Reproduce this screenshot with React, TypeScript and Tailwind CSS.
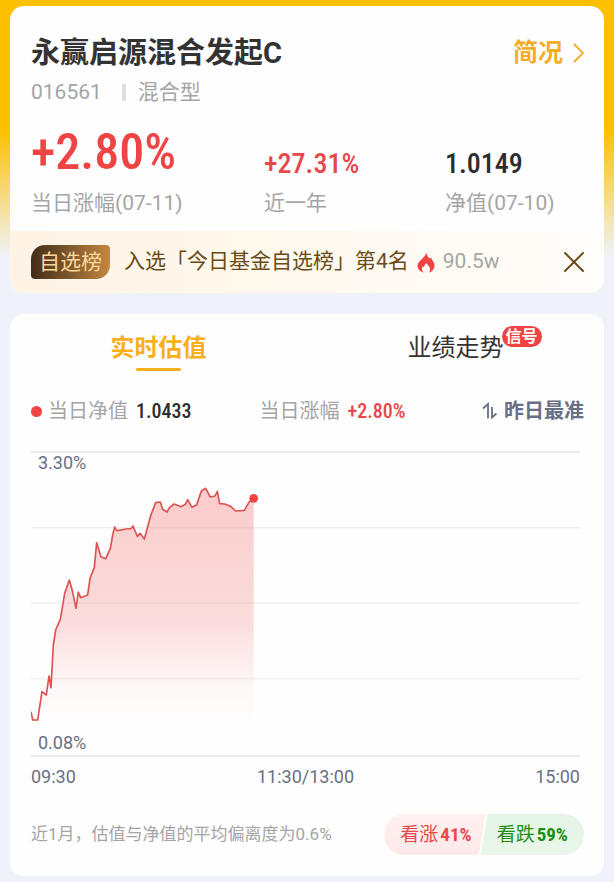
import { useState } from 'react';
import { X } from 'lucide-react';

const GRID_LINES = [230, 456, 683];

// intraday estimate, [x, y] in chart units
const POINTS = [
  [0, 782], [5, 807], [20, 807], [33, 722], [46, 732], [54, 675], [60, 710], [67, 582], [74, 537],
  [88, 505], [101, 427], [115, 387], [124, 419], [135, 472], [142, 423], [149, 440], [170, 432],
  [177, 382], [190, 349], [197, 275], [210, 317], [224, 323], [238, 293], [245, 252], [251, 228],
  [258, 239], [285, 234], [300, 233], [306, 225], [319, 256], [327, 247], [340, 264], [359, 194],
  [374, 155], [388, 153], [395, 175], [408, 183], [416, 169], [429, 159], [450, 167], [463, 160],
  [470, 146], [483, 169], [497, 161], [511, 120], [524, 112], [538, 138], [552, 135], [559, 121],
  [566, 158], [581, 159], [599, 166], [614, 180], [640, 178], [655, 152], [668, 142],
];

const linePath = 'M' + POINTS.map(([x, y]) => `${x} ${y}`).join('L');
const areaPath = `${linePath}L668 807L0 807Z`;

function Chevron() {
  return (
    <svg viewBox="0 0 11 20" className="h-5 w-[11px]" fill="none" stroke="currentColor" strokeWidth="1.8" aria-hidden="true">
      <path d="M1 1L10 10L1 19" />
    </svg>
  );
}

function Flame() {
  return (
    <svg viewBox="0 0 18 21" className="h-[21px] w-[18px]" aria-hidden="true">
      <path
        fill="#f04343"
        d="M9.4 0.4C9.8 3 10.8 4.8 12.6 6.6C13.3 6.3 13.8 5.8 14.1 5.2C14.4 7 15.2 8 16.2 9.6C17.2 11.2 17.7 12.6 17.5 14.2C17.1 17.4 15 19.8 12 20.6C13.2 19 13.4 17.2 12.6 15.4C11.8 13.8 10.2 13 9.6 11C8 12.4 7.2 13.6 6.9 15.2C6.4 15 6 14.6 5.8 14C4.6 16.2 4.9 18.6 6.4 20.6C3 19.6 0.5 17.2 0.5 13.8C0.5 11 2.2 9.6 4.4 7.4C6.6 5.3 8.8 3.4 9.4 0.4Z"
      />
    </svg>
  );
}

function SwapArrows() {
  return (
    <svg viewBox="0 0 16 18" className="h-[18px] w-4" fill="none" stroke="#677084" strokeWidth="1.8" aria-hidden="true">
      <path d="M1 6.5L6 2V16.5" />
      <path d="M10 5V15.5L14.5 11.5" />
    </svg>
  );
}

function EstimateChart() {
  return (
    <div className="relative">
      <svg viewBox="0 0 1647 918" className="block h-auto w-full" role="img" aria-label="实时估值">
        <defs>
          <linearGradient id="area" x1="0" y1="0" x2="0" y2="1">
            <stop offset="0" stopColor="#f04848" stopOpacity="0.28" />
            <stop offset="0.6" stopColor="#f04848" stopOpacity="0.18" />
            <stop offset="1" stopColor="#f8e8e0" stopOpacity="0.05" />
          </linearGradient>
        </defs>
        {GRID_LINES.map((y) => (
          <line key={y} x1="0" x2="1647" y1={y} y2={y} stroke="#f1f1f2" strokeWidth="5" />
        ))}
        <line x1="0" x2="1647" y1="3" y2="3" stroke="#e4e5e7" strokeWidth="5" />
        <line x1="0" x2="1647" y1="915" y2="915" stroke="#e4e5e7" strokeWidth="5" />
        <path d={areaPath} fill="url(#area)" />
        <path d={linePath} fill="none" stroke="#dc5352" strokeWidth="5" strokeLinejoin="round" />
        <circle cx="668" cy="142" r="13" fill="#f04343" />
      </svg>
      <span className="absolute top-0 left-[7px] leading-6">3.30%</span>
      <span className="absolute bottom-0.5 left-[7px] leading-6">0.08%</span>
    </div>
  );
}

export default function App() {
  const [showBanner, setShowBanner] = useState(true);
  const [tab, setTab] = useState<'estimate' | 'trend'>('estimate');

  return (
    <main className="flex min-h-screen flex-col gap-[21px] bg-[#eff3f9] bg-[linear-gradient(to_bottom,#fdc000_0px,#fdc000_130px,#eff3f9_256px)] px-2.5 pt-1.5 pb-1.5 font-[Roboto,'Noto_Sans_CJK_SC',sans-serif] text-[#a5a5a5]">
      <section className="overflow-hidden rounded-[14px] bg-[#fefefe]">
        <div className="pt-[26px] pr-5 pb-[7px] pl-[21px]">
          <div className="flex items-center justify-between leading-[42px]">
            <h1 className="text-[29px] font-bold text-[#333]">永赢启源混合发起C</h1>
            <a href="#profile" className="flex items-center gap-2.5 text-[25px] font-bold text-[#f3ad2b]">
              简况
              <Chevron />
            </a>
          </div>
          <p className="flex items-center text-[21px] leading-9">
            016561
            <span className="mr-3 ml-5 h-[17px] w-1 bg-[#dedede]" />
            混合型
          </p>
          <dl className="mt-3 grid grid-cols-[233fr_181fr_139fr] text-[21px]">
            <div className="flex flex-col-reverse">
              <dt className="leading-[42px]">当日涨幅(07-11)</dt>
              <dd className="font-['Roboto_Condensed',Roboto,sans-serif] text-[50px] leading-[60px] font-medium text-[#f04343]">+2.80%</dd>
            </div>
            <div className="flex flex-col-reverse">
              <dt className="leading-[42px]">近一年</dt>
              <dd className="font-['Roboto_Condensed',Roboto,sans-serif] text-[28px] leading-9 font-medium text-[#e8484a]">+27.31%</dd>
            </div>
            <div className="flex flex-col-reverse">
              <dt className="leading-[42px]">净值(07-10)</dt>
              <dd className="font-['Roboto_Condensed',Roboto,sans-serif] text-[28px] leading-9 font-medium text-[#2d2d2f]">1.0149</dd>
            </div>
          </dl>
        </div>
        {showBanner && (
          <div className="flex h-[62px] items-center bg-linear-to-r from-[#fef3e5] via-[#fef9ef] to-[#fffdfa] pr-3 pl-[21px] text-[21px]">
            <span className="rounded-tl-[14px] rounded-tr-sm rounded-br-[14px] rounded-bl-sm bg-linear-to-r from-[#422e18] to-[#c68843] px-2 leading-[34px] text-[#fbd79a]">自选榜</span>
            <span className="mr-2 ml-3.5 text-[#6b4a17]">入选「今日基金自选榜」第4名</span>
            <Flame />
            <span className="ml-2">90.5w</span>
            <button type="button" aria-label="关闭" className="ml-auto text-[#6b4a17]" onClick={() => setShowBanner(false)}>
              <X size={36} strokeWidth={1.3} />
            </button>
          </div>
        )}
      </section>

      <section className="rounded-[14px] bg-[#fefefe] pb-[21px]">
        <div className="grid grid-cols-2 justify-items-center pt-4 text-2xl leading-9">
          <button
            type="button"
            onClick={() => setTab('estimate')}
            className={`flex flex-col items-center ${tab === 'estimate' ? 'font-bold text-[#f9ae1c]' : 'text-[#333]'}`}
          >
            实时估值
            {tab === 'estimate' && <span className="mt-0.5 h-[3px] w-[45px] rounded-full bg-[#f9ae1c]" />}
          </button>
          <button
            type="button"
            onClick={() => setTab('trend')}
            className={`relative flex flex-col items-center ${tab === 'trend' ? 'font-bold text-[#f9ae1c]' : 'text-[#333]'}`}
          >
            业绩走势
            {tab === 'trend' && <span className="mt-0.5 h-[3px] w-[45px] rounded-full bg-[#f9ae1c]" />}
            <span className="absolute -top-1 left-full -ml-0.5 rounded-full bg-[#f04343] px-1 text-base leading-[21px] font-bold whitespace-nowrap text-white">信号</span>
          </button>
        </div>

        <div className="pr-5 pl-[21px]">
          <div className="mt-5 grid grid-cols-[229fr_200fr_125fr] items-center text-xl leading-10">
            <span className="flex items-center">
              <span className="mr-1.5 size-[11px] rounded-full bg-[#f04343]" />
              当日净值
              <b className="ml-2 font-['Roboto_Condensed',Roboto,sans-serif] font-medium text-[#2d2d2f]">1.0433</b>
            </span>
            <span className="flex items-center">
              当日涨幅
              <b className="ml-2 font-['Roboto_Condensed',Roboto,sans-serif] font-medium text-[#e8484a]">+2.80%</b>
            </span>
            <button type="button" className="flex items-center gap-1.5 justify-self-end font-bold whitespace-nowrap text-[#677084]">
              <SwapArrows />
              昨日最准
            </button>
          </div>

          <div className="mt-5 pr-1 text-lg text-[#677084]">
            <EstimateChart />
            <div className="flex justify-between leading-10">
              <span>09:30</span>
              <span>11:30/13:00</span>
              <span>15:00</span>
            </div>
          </div>

          <div className="mt-[17px] flex items-center justify-between">
            <p className="text-[17px]">近1月，估值与净值的平均偏离度为0.6%</p>
            <div className="flex text-[19px] leading-[41px]">
              <button type="button" className="flex rounded-l-full bg-linear-to-b from-[#fef2f1] to-[#fde8e9] pr-3.5 pl-4 text-[#e8484a] [clip-path:polygon(0_0,100%_0,calc(100%-7px)_100%,0_100%)]">
                看涨<b className="ml-0.5 font-['Roboto_Condensed',Roboto,sans-serif] font-bold">41%</b>
              </button>
              <button type="button" className="-ml-[5px] flex rounded-r-full bg-linear-to-b from-[#e3f4e4] to-[#eaf6ea] pr-4 pl-4 text-[#1f8f14] [clip-path:polygon(7px_0,100%_0,100%_100%,0_100%)]">
                看跌<b className="ml-0.5 font-['Roboto_Condensed',Roboto,sans-serif] font-bold">59%</b>
              </button>
            </div>
          </div>
        </div>
      </section>
    </main>
  );
}
